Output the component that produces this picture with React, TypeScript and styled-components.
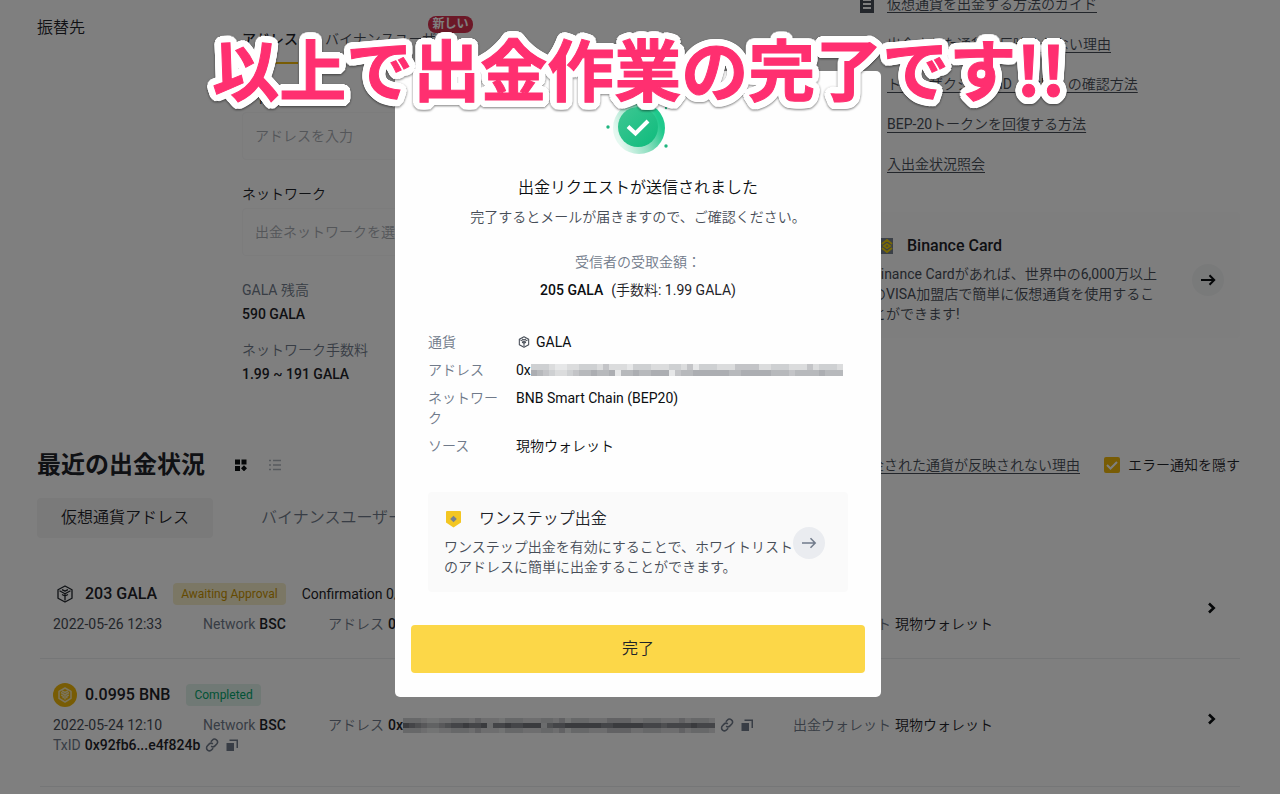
import React from 'react';
import styled, { createGlobalStyle } from 'styled-components';

const GlobalStyle = createGlobalStyle`
  *, *::before, *::after { box-sizing: border-box; }
  body {
    margin: 0;
    background: #ffffff;
    color: #1e2329;
    font-family: Roboto, "Noto Sans CJK JP DemiLight", "Noto Sans CJK JP Light", "Noto Sans CJK JP", sans-serif;
    font-size: 14px;
    line-height: 20px;
    overflow: hidden;
  }
  h1, h2, h3, p, dl, dd, dt, ul { margin: 0; padding: 0; }
  button, input, select { font: inherit; color: inherit; }
  button { border: 0; padding: 0; background: none; cursor: pointer; }
`;

const strongFont = `Roboto, "Noto Sans CJK JP", sans-serif`;

const Page = styled.main`
  height: 100vh;
  overflow: hidden;
  padding: 0 40px 0 37px;
`;

/* ---------- withdrawal form ---------- */

const Top = styled.section`
  display: grid;
  grid-template-columns: 205px minmax(0, 1fr) 384px;
`;

const SideTitle = styled.h2`
  padding-top: 16px;
  font-size: 16px;
  line-height: 24px;
  font-weight: 400;
`;

const Form = styled.form`
  padding: 24px 56px 0 0;
`;

const FormTabs = styled.div`
  display: flex;
  gap: 27px;
  margin-bottom: 24px;
`;

const FormTab = styled.button<{ $active?: boolean }>`
  position: relative;
  height: 40px;
  padding-bottom: 8px;
  border-bottom: 2px solid ${p => (p.$active ? '#f0b90b' : 'transparent')};
  color: ${p => (p.$active ? '#1e2329' : '#474d57')};
  font-family: ${p => (p.$active ? strongFont : 'inherit')};
  font-weight: ${p => (p.$active ? 500 : 400)};
`;

const NewBadge = styled.span`
  position: absolute;
  left: 103px;
  top: -8px;
  width: 45px;
  border-radius: 8px;
  background: #d9304e;
  color: #ffffff;
  font-family: ${strongFont};
  font-size: 12px;
  line-height: 17px;
  font-weight: 700;
`;

const Field = styled.div`
  display: flex;
  flex-direction: column;
  gap: 4px;
  margin-bottom: 24px;
`;

const fieldBox = `
  width: 100%;
  height: 48px;
  padding: 0 12px;
  border: 1px solid #f8f8f9;
  border-radius: 4px;
  background: transparent;
  outline: 0;
`;

const TextInput = styled.input`
  ${fieldBox}
  &::placeholder { color: #a8acb3; opacity: 1; }
`;

const SelectInput = styled.select`
  ${fieldBox}
  appearance: none;
  color: #a8acb3;
`;

const Stats = styled.dl`
  display: grid;
  row-gap: 4px;
`;

const StatName = styled.dt`
  color: #707a8a;
`;

const StatValue = styled.dd`
  margin-bottom: 12px;
  font-weight: 500;
`;

const Aside = styled.aside`
  margin-top: -16px;
`;

const LinkList = styled.ul`
  display: grid;
  list-style: none;
  margin-bottom: 28px;
`;

const LinkItem = styled.li`
  display: grid;
  grid-template-columns: 22px 1fr;
  column-gap: 9px;
  align-items: center;
  height: 40px;
  svg { justify-self: center; }
  a { grid-column: 2; }
`;

const TextLink = styled.a`
  color: #474d57;
  text-decoration: underline;
  text-underline-offset: 3px;
`;

const PromoCard = styled.section<{ $pad: string; $bg: string }>`
  display: flex;
  align-items: center;
  padding: ${p => p.$pad};
  border-radius: 4px;
  background: ${p => p.$bg};
`;

const PromoBody = styled.div`
  flex: 1;
  min-width: 0;
`;

const PromoTitle = styled.h3<{ $weight: number }>`
  display: flex;
  align-items: center;
  gap: 11px;
  margin-bottom: 8px;
  font-size: 16px;
  line-height: 20px;
  font-weight: ${p => p.$weight};
  color: #1e2329;
`;

const PromoText = styled.p`
  color: #474d57;
`;

const RoundButton = styled.button<{ $bg: string }>`
  display: grid;
  place-items: center;
  flex: none;
  width: 32px;
  height: 32px;
  border-radius: 50%;
  background: ${p => p.$bg};
`;

/* ---------- recent withdrawals ---------- */

const Recent = styled.section`
  padding-top: 53px;
`;

const RecentHead = styled.header`
  display: flex;
  align-items: center;
  height: 32px;
`;

const RecentTitle = styled.h2`
  margin-right: 28px;
  font-family: ${strongFont};
  font-size: 24px;
  line-height: 32px;
  font-weight: 700;
`;

const ViewButton = styled.button`
  display: grid;
  place-items: center;
  width: 16px;
  height: 16px;
  margin-right: 18px;
`;

const HeadTools = styled.div`
  display: flex;
  align-items: center;
  gap: 24px;
  margin-left: auto;
`;

const CheckLabel = styled.label`
  display: flex;
  align-items: center;
  gap: 8px;
`;

const CheckBox = styled.input`
  appearance: none;
  width: 16px;
  height: 16px;
  margin: 0;
  border-radius: 2px;
  background: #f0b90b url("data:image/svg+xml,%3Csvg xmlns='http://www.w3.org/2000/svg' viewBox='0 0 16 16' fill='none' stroke='white' stroke-width='2'%3E%3Cpath d='M3 8l3.5 3.5L13 5'/%3E%3C/svg%3E");
`;

const TypeTabs = styled.div`
  display: flex;
  gap: 24px;
  margin: 17px 0 32px;
`;

const TypeTab = styled.button<{ $active?: boolean }>`
  height: 40px;
  padding: 0 24px;
  border-radius: 4px;
  background: ${p => (p.$active ? '#f5f5f5' : 'transparent')};
  color: ${p => (p.$active ? '#1e2329' : '#707a8a')};
  font-size: 16px;
`;

const Record = styled.article`
  display: flex;
  align-items: center;
  margin-left: 3px;
  padding: 12px 20px 24px 13px;
  border-bottom: 1px solid #eaecef;
  & + & { padding-top: 24px; padding-bottom: 31px; }
`;

const RecordBody = styled.div`
  flex: 1;
  min-width: 0;
`;

const RecordHead = styled.div`
  display: flex;
  align-items: center;
  gap: 8px;
  height: 24px;
  margin-bottom: 8px;
`;

const Amount = styled.h3`
  margin-right: 8px;
  font-size: 16px;
  line-height: 24px;
  font-weight: 500;
`;

const Status = styled.span<{ $tone: 'wait' | 'done' }>`
  padding: 0 8px;
  margin-right: 8px;
  border-radius: 4px;
  font-size: 12px;
  line-height: 22px;
  color: ${p => (p.$tone === 'wait' ? '#c99400' : '#03a66d')};
  background: ${p => (p.$tone === 'wait' ? '#f7eecb' : '#e0f2ea')};
`;

const Meta = styled.div`
  display: grid;
  grid-template-columns: 150px 125px 465px 1fr;
  white-space: nowrap;
`;

const MetaCell = styled.span`
  display: flex;
  align-items: center;
  gap: 4px;
  color: #474d57;
`;

const Name = styled.span`
  color: #707a8a;
`;

const Strong = styled.span`
  display: flex;
  align-items: center;
  color: #1e2329;
  font-weight: 500;
`;

const Wallet = styled.span`
  color: #1e2329;
`;

const IconButton = styled.button`
  display: grid;
  place-items: center;
  width: 16px;
  height: 16px;
  color: #707a8a;
`;

/* ---------- dialog ---------- */

const Overlay = styled.div`
  position: fixed;
  inset: 0;
  display: flex;
  justify-content: center;
  align-items: flex-start;
  padding: 71px 4px 0 0;
  background: rgba(0, 0, 0, 0.5);
`;

const Dialog = styled.div`
  width: 486px;
  max-width: 100%;
  padding: 26px 16px 24px;
  border-radius: 5px;
  background: #fefefe;
`;

const Success = styled.div`
  display: flex;
  flex-direction: column;
  align-items: center;
  text-align: center;
`;

const DialogTitle = styled.h1`
  margin: 11px 0 9px;
  font-size: 16px;
  line-height: 20px;
  font-weight: 400;
  color: #0b0e11;
`;

const Lead = styled.p`
  margin-bottom: 25px;
  color: #474d57;
`;

const Receive = styled.p`
  margin-bottom: 8px;
  color: #707a8a;
`;

const Sum = styled.p`
  display: flex;
  gap: 8px;
  margin-bottom: 32px;
  b { font-weight: 500; color: #0b0e11; }
`;

const Details = styled.dl`
  display: grid;
  grid-template-columns: 72px minmax(0, 1fr);
  gap: 8px 16px;
  margin: 0 17px 36px;
`;

const Term = styled.dt`
  color: #707a8a;
`;

const Value = styled.dd`
  display: flex;
  align-items: center;
  height: 20px;
  color: #0b0e11;
  white-space: nowrap;
`;

const CoinName = styled.span`
  margin-left: 4px;
`;

const PromoWrap = styled.div`
  margin: 0 17px 33px;
`;

const DoneButton = styled.button`
  display: block;
  width: 100%;
  height: 48px;
  border-radius: 4px;
  background: #fcd748;
  color: #1e2329;
  font-size: 16px;
`;

/* White ring with round corners around the caption's glyphs. */
const ring = [3, 7]
  .flatMap(radius =>
    Array.from({ length: 32 }, (_, i) => {
      const angle = (i * Math.PI) / 16;
      return `${(radius * Math.cos(angle)).toFixed(1)}px ${(radius * Math.sin(angle)).toFixed(1)}px 0 #fff`;
    }),
  )
  .join(', ');

const Caption = styled.p`
  position: fixed;
  left: 0;
  right: 2px;
  top: 19px;
  text-align: center;
  white-space: nowrap;
  font-family: "Noto Sans CJK JP", sans-serif;
  font-size: 67px;
  line-height: 96px;
  font-weight: 700;
  color: #ff2f70;
  -webkit-text-stroke: 1px #ff2f70;
  text-shadow: ${ring};
  filter: drop-shadow(0 1px 1px rgba(0, 0, 0, 0.5));
`;

/* ---------- drawings ---------- */

const CubeIcon = ({ size, color, width }: { size: number; color: string; width: number }) => (
  <svg width={size} height={size} viewBox="0 0 24 24" fill="none" stroke={color} strokeWidth={width} strokeLinejoin="round">
    <path d="M12 4l7 3.800v8.400L12 20l-7-3.800V7.800z" />
    <path d="M6.500 8.800l5.500 3 5.500-3M12 11.800v6.700M9 7.600l3 1.500 3-1.500M9 12.500l3 1.500 3-1.500" />
  </svg>
);

const BnbIcon = () => (
  <svg width="24" height="24" viewBox="0 0 24 24">
    <circle cx="12" cy="12" r="12" fill="#f0b90b" />
    <g fill="none" stroke="#f7e9b8" strokeWidth="1.5" strokeLinejoin="round">
      <path d="M12 5l6 3.400v7L12 19l-6-3.600V8.400z" />
      <path d="M8 9.500l4 2.300 4-2.300M12 11.800v4.700M9 7.800l3 1.700 3-1.700M8.200 12l2 1.200v2M15.800 12l-2 1.200v2" />
    </g>
  </svg>
);

const ArrowIcon = ({ color, width }: { color: string; width: number }) => (
  <svg width="18" height="16" viewBox="0 0 18 16" fill="none" stroke={color} strokeWidth={width}>
    <path d="M2 8h13M10.500 3.300L15.200 8l-4.700 4.700" />
  </svg>
);

const ChevronIcon = () => (
  <svg width="10" height="14" viewBox="0 0 10 14" fill="none" stroke="#0b0e11" strokeWidth="2.600">
    <path d="M2 2.500L6.700 7 2 11.500" />
  </svg>
);

const DocIcon = () => (
  <svg width="14" height="18" viewBox="0 0 14 18">
    <path fill="#474d57" d="M0 0h14v18H0z" />
    <path stroke="#fff" strokeWidth="2" d="M3 5h8M3 9h8M3 13h8" />
  </svg>
);

const CardIcon = () => (
  <svg width="24" height="16" viewBox="0 0 24 16">
    <path fill="#76808f" d="M2 0h19v16H2z" />
    <path fill="none" stroke="#f0d00b" strokeWidth="2" d="M10 6l5-4 5 4M10 10l5 4 5-4M15 6l3 2-3 2-3-2z" />
  </svg>
);

const ShieldIcon = () => (
  <svg width="24" height="20" viewBox="0 0 24 20">
    <path fill="#f3c622" d="M2 3q0-1 1-1h13q1 0 1 1v10.500L9.500 18.500 2 13.500z" />
    <path fill="#76808f" d="M9.500 6.700l3.300 3.300-3.300 3.300L6.200 10z" />
  </svg>
);

const GridIcon = () => (
  <svg width="12" height="12" viewBox="0 0 12 12" fill="#0b0e11">
    <path d="M0 0.500h5v5H0zM6.500 0.500h5v5h-5zM0 7h5v5H0zM9 6.200L12 9.300 9 12.400 6 9.300z" />
  </svg>
);

const ListIcon = () => (
  <svg width="14" height="12" viewBox="0 0 14 12" fill="none" stroke="#aeb4bc" strokeWidth="1.500">
    <path d="M1 1.500h2M1 6h2M1 10.500h2M5 1.500h8M5 6h8M5 10.500h8" />
  </svg>
);

const LinkIcon = () => (
  <svg width="14" height="14" viewBox="0 0 24 24" fill="none" stroke="currentColor" strokeWidth="2.600">
    <path d="M10 6.500l2.500-2.800a5 5 0 0 1 7.600 6.600l-3 3.200a5 5 0 0 1-6.600.500" />
    <path d="M14 17.500l-2.500 2.800a5 5 0 0 1-7.600-6.600l3-3.200a5 5 0 0 1 6.600-.500" />
  </svg>
);

const CopyIcon = () => (
  <svg width="12" height="12" viewBox="0 0 12 12" fill="currentColor">
    <path d="M0.500 4h7.500v8H0.500zM3.500 0.500H12V9h-1.500V2H3.500z" />
  </svg>
);

const SuccessIcon = () => (
  <svg width="66" height="70" viewBox="0 0 66 70" aria-hidden="true">
    <defs>
      <linearGradient id="ring" x1="0.1" y1="0.700" x2="0.900" y2="0.400">
        <stop offset="0" stopColor="#e4f8f0" />
        <stop offset="0.550" stopColor="#8fdec0" />
        <stop offset="1" stopColor="#1fc98c" />
      </linearGradient>
      <linearGradient id="disc" x1="0" y1="0" x2="1" y2="1">
        <stop offset="0" stopColor="#3fc793" />
        <stop offset="1" stopColor="#0dbb7c" />
      </linearGradient>
    </defs>
    <circle cx="34" cy="31" r="26" fill="url(#ring)" />
    <circle cx="33" cy="30" r="20" fill="url(#disc)" />
    <path d="M23 29.500l7.500 7L43 24" fill="none" stroke="#fff" strokeWidth="4" />
    <g fill="#1fb57f">
      <circle cx="3" cy="30" r="1.700" />
      <circle cx="61" cy="49" r="1.700" />
      <circle cx="61" cy="11" r="1.200" />
    </g>
  </svg>
);

/* Darkness of each 6px cell of the censored address, 0 to 9. */
const MASK_TOP = '4443223344435333244433344352444333555533444333534443';
const MASK_BOTTOM = '7654334566766726676677725667777776677777666566667666';

const Mosaic = ({ dark }: { dark?: boolean }) => {
  const rows = dark ? [MASK_TOP, MASK_BOTTOM, MASK_TOP] : [MASK_TOP, MASK_BOTTOM];
  const rowHeight = dark ? 5 : 6;
  const height = rows.length * rowHeight;
  return (
    <svg width="312" height={height} viewBox={`0 0 312 ${height}`} shapeRendering="crispEdges" aria-hidden="true">
      {rows.map((row, r) =>
        row.split('').map((c, i) => (
          <rect
            key={`${r}-${i}`}
            x={i * 6}
            y={r * rowHeight}
            width="6"
            height={rowHeight}
            fill={dark && r === 1 ? '#4a4e56' : '#6b6f76'}
            opacity={Number(c) * (dark && r === 1 ? 0.11 : 0.08)}
          />
        )),
      )}
    </svg>
  );
};

const RowActions = () => (
  <>
    <IconButton aria-label="リンクを開く"><LinkIcon /></IconButton>
    <IconButton aria-label="コピー"><CopyIcon /></IconButton>
  </>
);

/* ---------- page ---------- */

export default function App() {
  return (
    <>
      <GlobalStyle />
      <Page>
        <Top>
          <SideTitle>振替先</SideTitle>
          <Form onSubmit={e => e.preventDefault()}>
            <FormTabs>
              <FormTab type="button" $active>アドレス</FormTab>
              <FormTab type="button">
                バイナンスユーザー
                <NewBadge>新しい</NewBadge>
              </FormTab>
            </FormTabs>
            <Field>
              <label htmlFor="address">アドレス</label>
              <TextInput id="address" placeholder="アドレスを入力" />
            </Field>
            <Field>
              <label htmlFor="network">ネットワーク</label>
              <SelectInput id="network">
                <option>出金ネットワークを選択</option>
              </SelectInput>
            </Field>
            <Stats>
              <StatName>GALA 残高</StatName>
              <StatValue>590 GALA</StatValue>
              <StatName>ネットワーク手数料</StatName>
              <StatValue>1.99 ~ 191 GALA</StatValue>
            </Stats>
          </Form>
          <Aside>
            <LinkList>
              <LinkItem><DocIcon /><TextLink href="#guide">仮想通貨を出金する方法のガイド</TextLink></LinkItem>
              <LinkItem><TextLink href="#reason">出金された通貨が反映されない理由</TextLink></LinkItem>
              <LinkItem><TextLink href="#txid">トランザクションID（TxID）の確認方法</TextLink></LinkItem>
              <LinkItem><TextLink href="#bep20">BEP-20トークンを回復する方法</TextLink></LinkItem>
              <LinkItem><TextLink href="#status">入出金状況照会</TextLink></LinkItem>
            </LinkList>
            <PromoCard $pad="24px 16px 14px" $bg="#fcfcfc">
              <PromoBody>
                <PromoTitle $weight={500}><CardIcon />Binance Card</PromoTitle>
                <PromoText>
                  Binance Cardがあれば、世界中の6,000万以上<br />
                  のVISA加盟店で簡単に仮想通貨を使用するこ<br />
                  とができます!
                </PromoText>
              </PromoBody>
              <RoundButton $bg="#f3f4f5" aria-label="Binance Card">
                <ArrowIcon color="#0b0e11" width={2} />
              </RoundButton>
            </PromoCard>
          </Aside>
        </Top>

        <Recent>
          <RecentHead>
            <RecentTitle>最近の出金状況</RecentTitle>
            <ViewButton aria-label="カード表示"><GridIcon /></ViewButton>
            <ViewButton aria-label="リスト表示"><ListIcon /></ViewButton>
            <HeadTools>
              <TextLink href="#missing">出金された通貨が反映されない理由</TextLink>
              <CheckLabel>
                <CheckBox type="checkbox" defaultChecked />
                エラー通知を隠す
              </CheckLabel>
            </HeadTools>
          </RecentHead>
          <TypeTabs>
            <TypeTab $active>仮想通貨アドレス</TypeTab>
            <TypeTab>バイナンスユーザー</TypeTab>
          </TypeTabs>

          <Record>
            <RecordBody>
              <RecordHead>
                <CubeIcon size={24} color="#1e2329" width={1.3} />
                <Amount>203 GALA</Amount>
                <Status $tone="wait">Awaiting Approval</Status>
                <span>Confirmation 0/0</span>
              </RecordHead>
              <Meta>
                <MetaCell>2022-05-26 12:33</MetaCell>
                <MetaCell><Name>Network</Name><Strong>BSC</Strong></MetaCell>
                <MetaCell><Name>アドレス</Name><Strong>0x</Strong></MetaCell>
                <MetaCell><Name>出金ウォレット</Name><Wallet>現物ウォレット</Wallet></MetaCell>
              </Meta>
            </RecordBody>
            <IconButton aria-label="詳細"><ChevronIcon /></IconButton>
          </Record>

          <Record>
            <RecordBody>
              <RecordHead>
                <BnbIcon />
                <Amount>0.0995 BNB</Amount>
                <Status $tone="done">Completed</Status>
              </RecordHead>
              <Meta>
                <MetaCell>2022-05-24 12:10</MetaCell>
                <MetaCell><Name>Network</Name><Strong>BSC</Strong></MetaCell>
                <MetaCell><Name>アドレス</Name><Strong>0x<Mosaic dark /></Strong><RowActions /></MetaCell>
                <MetaCell><Name>出金ウォレット</Name><Wallet>現物ウォレット</Wallet></MetaCell>
              </Meta>
              <MetaCell><Name>TxID</Name><Strong>0x92fb6...e4f824b</Strong><RowActions /></MetaCell>
            </RecordBody>
            <IconButton aria-label="詳細"><ChevronIcon /></IconButton>
          </Record>
        </Recent>
      </Page>

      <Overlay>
        <Dialog role="dialog" aria-modal="true" aria-labelledby="dialog-title">
          <Success>
            <SuccessIcon />
            <DialogTitle id="dialog-title">出金リクエストが送信されました</DialogTitle>
            <Lead>完了するとメールが届きますので、ご確認ください。</Lead>
            <Receive>受信者の受取金額：</Receive>
            <Sum><b>205 GALA</b><span>(手数料: 1.99 GALA)</span></Sum>
          </Success>
          <Details>
            <Term>通貨</Term>
            <Value><CubeIcon size={16} color="#474d57" width={1.6} /><CoinName>GALA</CoinName></Value>
            <Term>アドレス</Term>
            <Value>0x<Mosaic /></Value>
            <Term>ネットワーク</Term>
            <Value>BNB Smart Chain (BEP20)</Value>
            <Term>ソース</Term>
            <Value>現物ウォレット</Value>
          </Details>
          <PromoWrap>
            <PromoCard $pad="17px 23px 15px 16px" $bg="#fafafa">
              <PromoBody>
                <PromoTitle $weight={400}><ShieldIcon />ワンステップ出金</PromoTitle>
                <PromoText>
                  ワンステップ出金を有効にすることで、ホワイトリスト<br />
                  のアドレスに簡単に出金することができます。
                </PromoText>
              </PromoBody>
              <RoundButton $bg="#eaecf0" aria-label="ワンステップ出金">
                <ArrowIcon color="#707a8a" width={1.5} />
              </RoundButton>
            </PromoCard>
          </PromoWrap>
          <DoneButton>完了</DoneButton>
        </Dialog>
      </Overlay>
      <Caption>以上で出金作業の完了です!!</Caption>
    </>
  );
}
